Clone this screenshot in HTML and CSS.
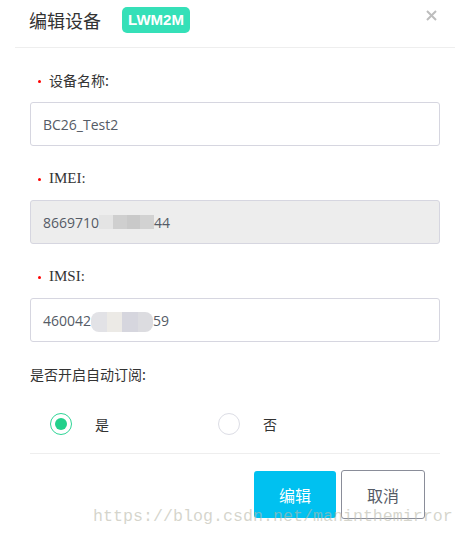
FILE: index.html
```html
<!DOCTYPE html>
<html lang="zh">
<head>
<meta charset="utf-8">
<link rel="stylesheet" href="styles.css">
</head>
<body>
<div class="dialog">
  <div class="header">
    <span class="title">编辑设备</span>
    <span class="badge">LWM2M</span>
    <span class="close"><svg width="11" height="11" viewBox="0 0 11 11"><path d="M1 1L10 10M10 1L1 10" stroke="#bdbdbd" stroke-width="2" fill="none"/></svg></span>
  </div>
  <div class="form">
    <div class="group">
      <div class="label"><span class="dot"></span><span>设备名称:</span></div>
      <div class="input">BC26_Test2</div>
    </div>
    <div class="group">
      <div class="label"><span class="dot"></span><span class="latin">IMEI:</span></div>
      <div class="input disabled">8669710<span class="mask mask-a"><i></i><i></i><i></i><i></i></span>44</div>
    </div>
    <div class="group">
      <div class="label"><span class="dot"></span><span class="latin">IMSI:</span></div>
      <div class="input">460042<span class="mask mask-b"><i></i><i></i><i></i><i></i></span>59</div>
    </div>
    <div class="plain-label">是否开启自动订阅:</div>
    <div class="radios">
      <div class="option"><span class="radio checked"><span class="inner"></span></span><span>是</span></div>
      <div class="option"><span class="radio"></span><span>否</span></div>
    </div>
    <div class="footer">
      <button class="btn primary">编辑</button>
      <button class="btn default">取消</button>
    </div>
  </div>
  <div class="watermark">https://blog.csdn.net/maninthemirror</div>
</div>
</body>
</html>
```
FILE: styles.css
```css
* { box-sizing: border-box; }
html, body { margin: 0; padding: 0; background: #fff; }
body {
  font-family: "Noto Sans CJK SC", "Liberation Sans", sans-serif;
  color: #333;
  width: 464px;
  height: 539px;
  overflow: hidden;
}
.dialog { position: relative; height: 539px; }
.header {
  margin: 0 9px 0 15px;
  height: 48px;
  padding: 0 0 8px 14px;
  border-bottom: 1px solid #eeeeee;
  display: flex;
  align-items: center;
}
.title { font-size: 18px; line-height: 24px; color: #333; }
.badge {
  margin-left: 21px;
  width: 68px;
  height: 26px;
  border-radius: 5px;
  background: #35e0b8;
  color: #fff;
  font-family: "Liberation Sans", sans-serif;
  font-weight: bold;
  font-size: 15px;
  display: flex;
  align-items: center;
  justify-content: center;
}
.close {
  margin-left: auto;
  margin-right: 18px;
  align-self: flex-start;
  margin-top: 10px;
  width: 11px;
  height: 11px;
  display: flex;
}
.form { margin: 0 24px 0 30px; padding-top: 22px; }
.group { margin-bottom: 22px; }
.label {
  display: flex;
  align-items: center;
  height: 20px;
  padding-left: 8px;
  font-size: 14px;
  color: #333;
  margin-bottom: 12px;
}
.dot {
  width: 3px; height: 3px; border-radius: 50%;
  background: #f00;
  margin-right: 8px;
  margin-top: 2px;
}
.latin { font-family: "Liberation Serif", serif; font-size: 15px; }
.input {
  height: 44px;
  border: 1px solid #d6d6e0;
  border-radius: 3px;
  padding-left: 12px;
  display: flex;
  align-items: center;
  font-family: "Open Sans", "Liberation Sans", sans-serif;
  font-size: 14px;
  color: #555b66;
}
.input.disabled { background: #ededed; }
.mask { display: flex; width: 55px; height: 14px; }
.mask i { flex: 1; display: block; }
.mask-a i:nth-child(1) { background: #e4e4e4; }
.mask-a i:nth-child(2) { background: #cfcfcf; }
.mask-a i:nth-child(3) { background: #c9c9c9; }
.mask-a i:nth-child(4) { background: #d2d2d2; }
.mask-b { width: 62px; height: 20px; border-radius: 8px; overflow: hidden; margin-top: 4px; }
.mask-b i:nth-child(1) { background: #e2e2e6; }
.mask-b i:nth-child(2) { background: #eceae6; }
.mask-b i:nth-child(3) { background: #d6d6de; }
.mask-b i:nth-child(4) { background: #dcdce0; }
.plain-label { height: 20px; line-height: 20px; font-size: 14px; color: #333; }
.radios {
  display: flex;
  padding-left: 20px;
  margin-top: 29px;
  padding-bottom: 18px;
  border-bottom: 1px solid #eeeeee;
}
.option { width: 168px; display: flex; align-items: center; font-size: 14px; color: #333; }
.radio {
  width: 22px; height: 22px; border-radius: 50%;
  border: 1.5px solid #dcdde5;
  margin-right: 23px;
  display: flex; align-items: center; justify-content: center;
}
.radio.checked { border-color: #2fd596; }
.inner { width: 12px; height: 12px; border-radius: 50%; background: #22d08b; }
.footer {
  display: flex;
  justify-content: flex-end;
  align-items: center;
  gap: 5px;
  padding-right: 15px;
  margin-top: 16px;
}
.btn {
  font-family: "Noto Sans CJK SC", sans-serif;
  font-size: 16px;
  border-radius: 3px;
  cursor: pointer;
}
.primary { width: 82px; height: 47px; background: #00c1f0; color: #fff; border: none; }
.default { width: 84px; height: 49px; background: #fff; color: #555b66; border: 1px solid #8a8d99; }
.watermark {
  position: absolute;
  left: 93px;
  top: 507px;
  font-family: "Liberation Mono", monospace;
  font-size: 16.67px;
  color: rgba(185, 185, 170, 0.6);
  pointer-events: none;
  white-space: nowrap;
}
```
